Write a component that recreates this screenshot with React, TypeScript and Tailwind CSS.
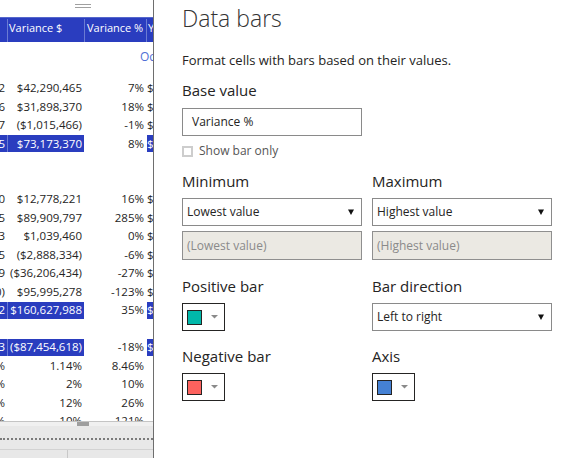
import React from "react"

type Row = { a?: string; b?: string; c?: string; d?: string; hi?: boolean }

const rows: Row[] = [
  { a: "2", b: "$42,290,465", c: "7%", d: "$" },
  { a: "6", b: "$31,898,370", c: "18%", d: "$" },
  { a: "7", b: "($1,015,466)", c: "-1%", d: "$" },
  { a: "5", b: "$73,173,370", c: "8%", d: "$", hi: true },
  {},
  {},
  { a: "0", b: "$12,778,221", c: "16%", d: "$" },
  { a: "5", b: "$89,909,797", c: "285%", d: "$" },
  { a: "3", b: "$1,039,460", c: "0%", d: "$" },
  { a: "5", b: "($2,888,334)", c: "-6%", d: "$" },
  { a: "9", b: "($36,206,434)", c: "-27%", d: "$" },
  { a: "0)", b: "$95,995,278", c: "-123%", d: "$" },
  { a: "2", b: "$160,627,988", c: "35%", d: "$", hi: true },
  {},
  { a: "3", b: "($87,454,618)", c: "-18%", d: "$", hi: true },
  { a: "%", b: "1.14%", c: "8.46%" },
  { a: "%", b: "2%", c: "10%" },
  { a: "%", b: "12%", c: "26%" },
  { a: "%", b: "10%", c: "121%" },
]

function TableRow({ row }: { row: Row }) {
  const blue = row.hi ? "bg-[#2a3dbf] text-white" : ""
  return (
    <div className="flex h-[18.5px] shrink-0">
      <div className={`flex h-[17px] w-[8px] shrink-0 items-center justify-end overflow-hidden border-r border-transparent pr-[2px] ${row.hi ? "bg-[#2a3dbf] text-white border-r-[#6b7bd3]" : ""}`}>
        <span className="whitespace-nowrap">{row.a}</span>
      </div>
      <div className={`flex h-[17px] w-[76px] shrink-0 items-center justify-end overflow-hidden pr-[2px] ${blue}`}>
        <span className="whitespace-nowrap">{row.b}</span>
      </div>
      <div className="w-px shrink-0" />
      <div className="flex h-[17px] w-[62px] shrink-0 items-center justify-end pr-[3px]">
        <span className="whitespace-nowrap">{row.c}</span>
      </div>
      <div className={`flex h-[17px] w-[20px] shrink-0 items-center ${blue}`}>
        <span className="whitespace-nowrap">{row.d}</span>
      </div>
    </div>
  )
}

function Select({ value }: { value: string }) {
  return (
    <div className="flex h-[28px] items-center justify-between border border-[#8a8a8a] bg-white pl-[4px] pr-[7px] text-[12px] text-[#252423]">
      <span>{value}</span>
      <svg width="6" height="6" viewBox="0 0 6 6">
        <polygon points="0,0.5 6,0.5 3,6" fill="#111" />
      </svg>
    </div>
  )
}

function Swatch({ color }: { color: string }) {
  return (
    <div className="flex h-[28px] w-[43px] items-center border border-[#252423] bg-white pl-[4px]">
      <div className={`h-[15px] w-[15px] border border-[#252423] ${color}`} />
      <svg className="ml-[9px]" width="7" height="4" viewBox="0 0 7 4">
        <polygon points="0,0 7,0 3.5,3.5" fill="#8a8a8a" />
      </svg>
    </div>
  )
}

export default function App() {
  return (
    <div className="flex h-[458px] w-[574px] overflow-hidden bg-white font-['Open_Sans',sans-serif] text-[#252423]">
      {/* matrix visual behind the pane */}
      <div className="flex w-[153px] shrink-0 flex-col overflow-hidden text-[11.5px]">
        <div className="flex h-[17px] shrink-0 flex-col items-center pt-[4px]">
          <div className="ml-[13px] h-px w-[16px] bg-[#a0a0a0]" />
          <div className="ml-[13px] mt-[2px] h-px w-[16px] bg-[#a0a0a0]" />
        </div>
        <div className="flex h-[25px] shrink-0 border-t border-[#5567cc] bg-[#2a3dbf] pt-[1px] text-[11px] leading-[18px] text-white">
          <div className="w-[8px] shrink-0 border-r border-[#6b7bd3]" />
          <div className="w-[77px] shrink-0 border-r border-[#6b7bd3] pl-[1px]">Variance $</div>
          <div className="w-[62px] shrink-0 whitespace-nowrap border-r border-[#6b7bd3] pl-[2px]">Variance %</div>
          <div className="pl-[1px]">Y</div>
        </div>
        <div className="h-[37.5px] shrink-0 whitespace-nowrap pl-[140px] pt-[6px] text-[12px] text-[#4f6fd6]">October</div>
        <div className="flex h-[341.5px] shrink-0 flex-col overflow-hidden">
          {rows.map((r, i) => (
            <TableRow key={i} row={r} />
          ))}
        </div>
        <div className="h-[5px] shrink-0 border-t border-[#c4c4c4] bg-[#f0f0f0] pl-[77px]">
          <div className="h-[4px] w-[12px] bg-[#9e9e9e]" />
        </div>
        <div className="flex flex-1 flex-col bg-[#e8e8e8]">
          <div className="mt-[12px] h-0 border-t-2 border-dotted border-[#7a7a7a]" />
          <div className="mt-[9px] flex flex-1 border-t border-[#d2d2d2]">
            <div className="w-[68px] border-r border-[#c8c8c8]" />
          </div>
        </div>
      </div>
      <div className="w-px shrink-0 bg-[#6e6e6e]" />

      {/* format pane */}
      <div className="flex-1 pl-[28px] pt-[2px]">
        <div className="text-[23px] font-light leading-[32px] text-[#333]">Data bars</div>
        <div className="mt-[17px] text-[13px] leading-[18px]">Format cells with bars based on their values.</div>
        <div className="mt-[11px] text-[15px] leading-[20px]">Base value</div>
        <div className="mt-[8px] flex h-[28px] w-[180px] items-center border border-[#8a8a8a] pl-[9px] text-[12px]">Variance %</div>
        <div className="mt-[9px] flex h-[12px] items-center gap-[6px]">
          <div className="h-[11px] w-[11px] border-2 border-[#cdcdcd]" />
          <span className="text-[12px] text-[#555]">Show bar only</span>
        </div>

        <div className="mt-[14px] grid grid-cols-[180px_180px] gap-x-[10px]">
          <div>
            <div className="text-[15px] leading-[20px]">Minimum</div>
            <div className="mt-[7px]">
              <Select value="Lowest value" />
            </div>
            <div className="mt-[5px] flex h-[29px] items-center border border-[#8f8f8f] bg-[#ebe9e3] pl-[4px] text-[12px] text-[#8a8a8a]">
              (Lowest value)
            </div>
          </div>
          <div>
            <div className="text-[15px] leading-[20px]">Maximum</div>
            <div className="mt-[7px]">
              <Select value="Highest value" />
            </div>
            <div className="mt-[5px] flex h-[29px] items-center border border-[#8f8f8f] bg-[#ebe9e3] pl-[4px] text-[12px] text-[#8a8a8a]">
              (Highest value)
            </div>
          </div>

          <div className="mt-[16px]">
            <div className="text-[15px] leading-[20px]">Positive bar</div>
            <div className="mt-[7px]">
              <Swatch color="bg-[#01b8aa]" />
            </div>
          </div>
          <div className="mt-[16px]">
            <div className="text-[15px] leading-[20px]">Bar direction</div>
            <div className="mt-[7px]">
              <Select value="Left to right" />
            </div>
          </div>

          <div className="mt-[15px]">
            <div className="text-[15px] leading-[20px]">Negative bar</div>
            <div className="mt-[7px]">
              <Swatch color="bg-[#fd625e]" />
            </div>
          </div>
          <div className="mt-[15px]">
            <div className="text-[15px] leading-[20px]">Axis</div>
            <div className="mt-[7px]">
              <Swatch color="bg-[#4581d4]" />
            </div>
          </div>
        </div>
      </div>
    </div>
  )
}
